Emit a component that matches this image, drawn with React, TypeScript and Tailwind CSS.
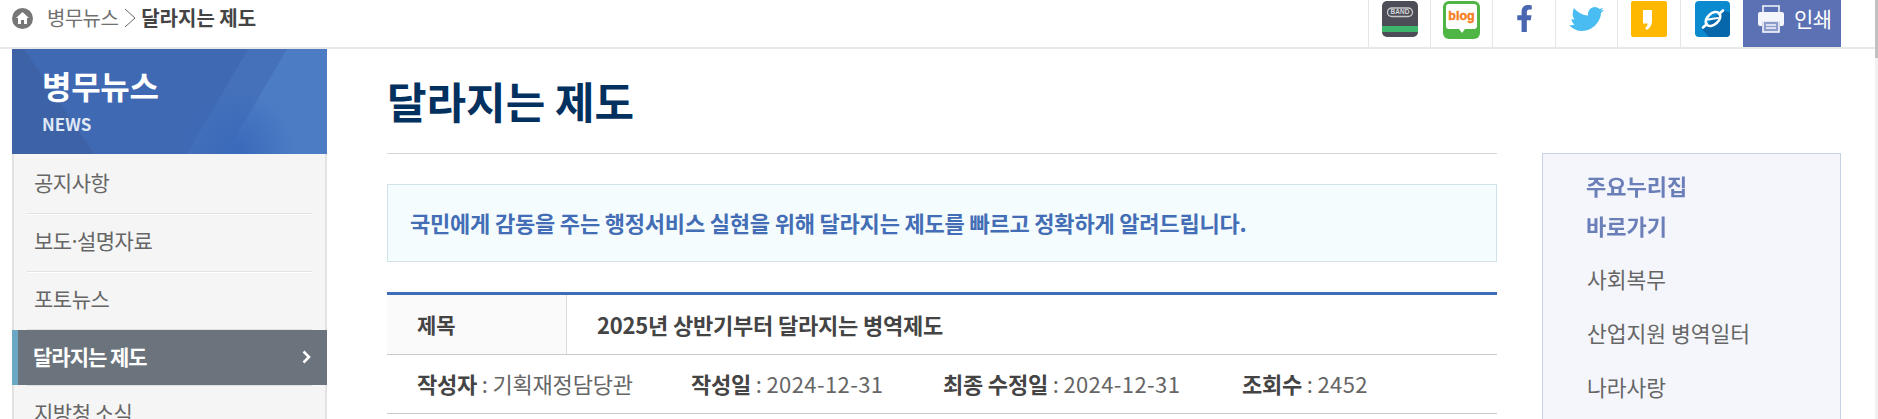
import { FaFacebookF } from "react-icons/fa";

const quickLinks = ["사회복무", "산업지원 병역일터", "나라사랑"];

function SideItem({ children }: { children: React.ReactNode }) {
  return (
    <div className="mx-[13px] flex h-[58px] items-center border-b border-[#e2e2e2] pb-[3px] pl-[7px] shadow-[0_1px_0_#fff]">
      <span className="tracking-[-0.5px]">{children}</span>
    </div>
  );
}

function BandIcon() {
  return (
    <svg width="36" height="36" viewBox="0 0 36 36">
      <rect width="36" height="36" rx="5" fill="#4c4d56" />
      <rect y="25" width="36" height="6" fill="#3db56b" />
      <rect x="5.5" y="7" width="25" height="8.5" rx="4.2" fill="none" stroke="#c9c9cc" strokeWidth="1.3" />
      <text x="18" y="13.4" textAnchor="middle" fontSize="6.5" fontWeight="700" fill="#d5d5d8" fontFamily="Liberation Sans, sans-serif">BAND</text>
    </svg>
  );
}

function BlogIcon() {
  return (
    <svg width="37" height="38" viewBox="0 0 37 38">
      <rect width="37" height="38" rx="6" fill="#4fb645" />
      <path d="M6 3h25a3 3 0 0 1 3 3v19a3 3 0 0 1-3 3H22l-3 4-3-4H6a3 3 0 0 1-3-3V6a3 3 0 0 1 3-3z" fill="#fff" />
      <text x="18.5" y="19" textAnchor="middle" fontSize="12.5" fontWeight="700" fill="#f47f20" stroke="#f47f20" strokeWidth="0.4" fontFamily="Liberation Sans, sans-serif">blog</text>
    </svg>
  );
}

function TwitterIcon() {
  return (
    <svg width="36" height="26" viewBox="0 0 36 26" fill="#49bdf1">
      <path d="M0 19c2 .5 4 .3 5.500-.5C3.500 17 2.500 15 2.500 13c1 .4 2 .5 3 .3C3.500 11 3 7 5 2c3 4 8 7 14 7.500C18.500 5 21.500 1 26 1c2 0 3.500 1 4.500 2 1.200-.2 2.500-.8 3.500-1.500-.4 1.300-1.300 2.500-2.500 3.200 1.200-.1 2.300-.4 3.500-.9-.8 1.200-1.900 2.200-3 3C32 15 24 25 13 25 8 25 4 23 0 19z" />
    </svg>
  );
}

function StoryIcon() {
  return (
    <svg width="36" height="36" viewBox="0 0 36 36">
      <rect width="36" height="36" rx="2" fill="#ffb800" />
      <path d="M12 9h9v11c0 4-2 7-5 9l-2-2c1.500-1 2.500-2.500 2.700-4.500H12z" fill="#fff" />
    </svg>
  );
}

function LinkIcon() {
  return (
    <svg width="35" height="36" viewBox="0 0 35 36">
      <rect width="35" height="36" rx="4" fill="#0a8bd0" />
      <path d="M35 12v20a4 4 0 0 1-4 4H14L7 28 28 9z" fill="#0668ab" />
      <g fill="none" stroke="#fff" strokeLinecap="round">
        <ellipse cx="18" cy="18" rx="8.500" ry="5.500" strokeWidth="2.600" transform="rotate(-42 18 18)" />
        <path d="M13 18.500l10-1.500" strokeWidth="2" />
        <path d="M8 26.500l4-3.500M28 9.500l-4 3.500" strokeWidth="2.600" />
      </g>
    </svg>
  );
}

function PrintIcon() {
  return (
    <svg width="26" height="28" viewBox="0 0 26 28">
      <path d="M5 8V1h16v7" fill="none" stroke="#f4f6fb" strokeWidth="1.600" />
      <path d="M2 7h22a2 2 0 0 1 2 2v10a2 2 0 0 1-2 2h-2v-5H4v5H2a2 2 0 0 1-2-2V9a2 2 0 0 1 2-2z" fill="#f4f6fb" />
      <rect x="5" y="16" width="16" height="11" fill="#8c9ccb" stroke="#f4f6fb" strokeWidth="1.600" />
      <path d="M8 20h10M8 23h10" stroke="#f4f6fb" strokeWidth="1.300" />
    </svg>
  );
}

export default function App() {
  return (
    <div className="flex h-[419px] overflow-hidden bg-white text-[#666]" style={{ fontFamily: '"Noto Sans CJK KR", sans-serif' }}>
      <div className="w-[1875px] shrink-0">
        {/* Top bar */}
        <header className="flex h-[49px] items-start justify-between border-b-2 border-[#e8e8e8]">
          <div className="flex h-[47px] items-center pl-3 pb-[11px]">
            <span className="flex h-[21px] w-[21px] items-center justify-center rounded-full bg-[#777]">
              <svg width="13" height="12" viewBox="0 0 13 12" fill="#fff">
                <path d="M6.500 0L13 6h-2v6H8V8H5v4H2V6H0z" />
              </svg>
            </span>
            <span className="ml-[14px] text-[20px] tracking-[-0.6px] text-[#707070]">병무뉴스</span>
            <svg className="ml-[6px] mr-[5px]" width="12" height="20" viewBox="0 0 12 20" fill="none" stroke="#666" strokeWidth="1">
              <path d="M1 1l10 9-10 9" />
            </svg>
            <span className="text-[20px] font-bold text-[#444]">달라지는 제도</span>
          </div>
          <div className="mr-[34px] flex h-[47px]">
            <div className="flex w-[63px] items-start justify-center border-x border-[#e6e6e6] pt-px"><BandIcon /></div>
            <div className="flex w-[62px] items-start justify-center border-r border-[#e6e6e6] pt-px"><BlogIcon /></div>
            <div className="flex w-[63px] items-start justify-center border-r border-[#e6e6e6] pt-[5px]"><FaFacebookF size={27} color="#4b66b1" /></div>
            <div className="flex w-[62px] items-start justify-center border-r border-[#e6e6e6] pt-[6px]"><TwitterIcon /></div>
            <div className="flex w-[63px] items-start justify-center border-r border-[#e6e6e6] pt-px"><StoryIcon /></div>
            <div className="flex w-[62px] items-start justify-center pt-px"><LinkIcon /></div>
            <div className="flex w-[98px] items-center gap-[10px] bg-[#5b71b4] pb-[10px] pl-[15px] text-[21px] tracking-[-0.5px] text-white">
              <PrintIcon />
              <span>인쇄</span>
            </div>
          </div>
        </header>

        <div className="flex items-start pl-3">
          {/* Side menu */}
          <aside className="w-[315px] shrink-0">
            <div className="relative h-[105px] overflow-hidden pl-[30px] pt-[16px] text-white">
              <svg className="absolute inset-0" width="315" height="105" viewBox="0 0 315 105">
                <defs>
                  <radialGradient id="glow">
                    <stop offset="0" stopColor="#3a69bb" />
                    <stop offset="1" stopColor="#3a69bb" stopOpacity="0" />
                  </radialGradient>
                </defs>
                <path d="M0 0h315v105H0z" fill="#4069b3" />
                <path d="M0 0h12l70 105H0z" fill="#3d62a6" />
                <path d="M236 0h79v105H175z" fill="#4471b9" />
                <path d="M275 0h40v105H213z" fill="#4c7dc4" />
                <circle cx="225" cy="100" r="60" fill="url(#glow)" />
              </svg>
              <div className="relative text-[32px] font-bold leading-[40px] tracking-[-0.3px]">병무뉴스</div>
              <div className="relative mt-[8px] text-[17px] font-bold leading-[22px] text-[#dfe7f5]">NEWS</div>
            </div>
            <nav className="border-x-2 border-[#e2e2e2] bg-[#f5f5f5] pt-[2px] text-[21px] text-[#666]">
              <SideItem>공지사항</SideItem>
              <SideItem>보도<span className="-mx-[3px]">·</span>설명자료</SideItem>
              <SideItem>포토뉴스</SideItem>
              <div className="-mx-[2px] flex h-[55px] items-center justify-between border-l-[6px] border-[#69a9c6] bg-[#6b747c] pb-[2px] pl-[15px] pr-[16px] text-[21px] font-bold tracking-[-1px] text-white">
                <span>달라지는 제도</span>
                <svg width="9" height="14" viewBox="0 0 9 14" fill="none" stroke="#fff" strokeWidth="2.600">
                  <path d="M1.500 1.500L7 7l-5.500 5.500" />
                </svg>
              </div>
              <div className="mx-[13px] flex h-[55px] items-center border-t border-[#e2e2e2] pl-[7px]">
                <span className="tracking-[-0.5px]">지방청 소식</span>
              </div>
            </nav>
          </aside>

          {/* Main content */}
          <main className="ml-[60px] w-[1110px] shrink-0">
            <div className="flex h-[105px] items-start border-b border-[#d6d6d6] pt-[21px]">
              <h1 className="text-[43px] font-bold leading-[60px] text-[#03315f]">달라지는 제도</h1>
            </div>
            <div className="mt-[30px] flex h-[78px] items-center border border-[#cfe3e8] bg-[#f4fcfe] pb-[2px] pl-[22px] text-[22px] font-bold tracking-[-0.2px] text-[#436db5]">
              국민에게 감동을 주는 행정서비스 실현을 위해 달라지는 제도를 빠르고 정확하게 알려드립니다.
            </div>
            <div className="mt-[30px] border-t-[3px] border-[#3d6cb9]">
              <div className="flex h-[60px] border-b border-[#cccccc] text-[#444]">
                <div className="flex w-[180px] items-center border-r border-[#d9d9d9] bg-[#fafafa] pl-[30px] text-[21px] font-bold">제목</div>
                <div className="flex items-center pl-[30px] text-[22px] font-bold tracking-[-0.2px]">2025년 상반기부터 달라지는 병역제도</div>
              </div>
              <div className="flex h-[59px] items-center border-b border-[#cccccc] pb-[2px] pl-[30px] text-[22px] tracking-[-0.2px]">
                <div className="w-[274px]"><b className="font-bold text-[#444]">작성자</b> : 기획재정담당관</div>
                <div className="w-[252px]"><b className="font-bold text-[#444]">작성일</b> : <span className="tracking-[0.4px]">2024-12-31</span></div>
                <div className="w-[299px]"><b className="font-bold text-[#444]">최종 수정일</b> : <span className="tracking-[0.4px]">2024-12-31</span></div>
                <div><b className="font-bold text-[#444]">조회수</b> : <span className="tracking-[0.4px]">2452</span></div>
              </div>
            </div>
          </main>

          {/* Quick links */}
          <aside className="ml-[45px] mt-[104px] h-[300px] w-[299px] shrink-0 border border-[#c8d0e4] bg-[#f5f6fb] pl-[43px] pt-[11px]">
            <div className="text-[22px] font-bold leading-[40px] text-[#6a7eb8] blur-[0.4px]">주요누리집<br />바로가기</div>
            <ul className="mt-[7px] pl-[1px] text-[21.5px] text-[#666]">
              {quickLinks.map((link) => (
                <li key={link} className="flex h-[54px] items-center">{link}</li>
              ))}
            </ul>
          </aside>
        </div>
      </div>

      {/* Page scrollbar */}
      <div className="w-[3px] shrink-0 bg-[#f1f1f1]">
        <div className="h-[58px] bg-[#c1c1c1]" />
      </div>
    </div>
  );
}
